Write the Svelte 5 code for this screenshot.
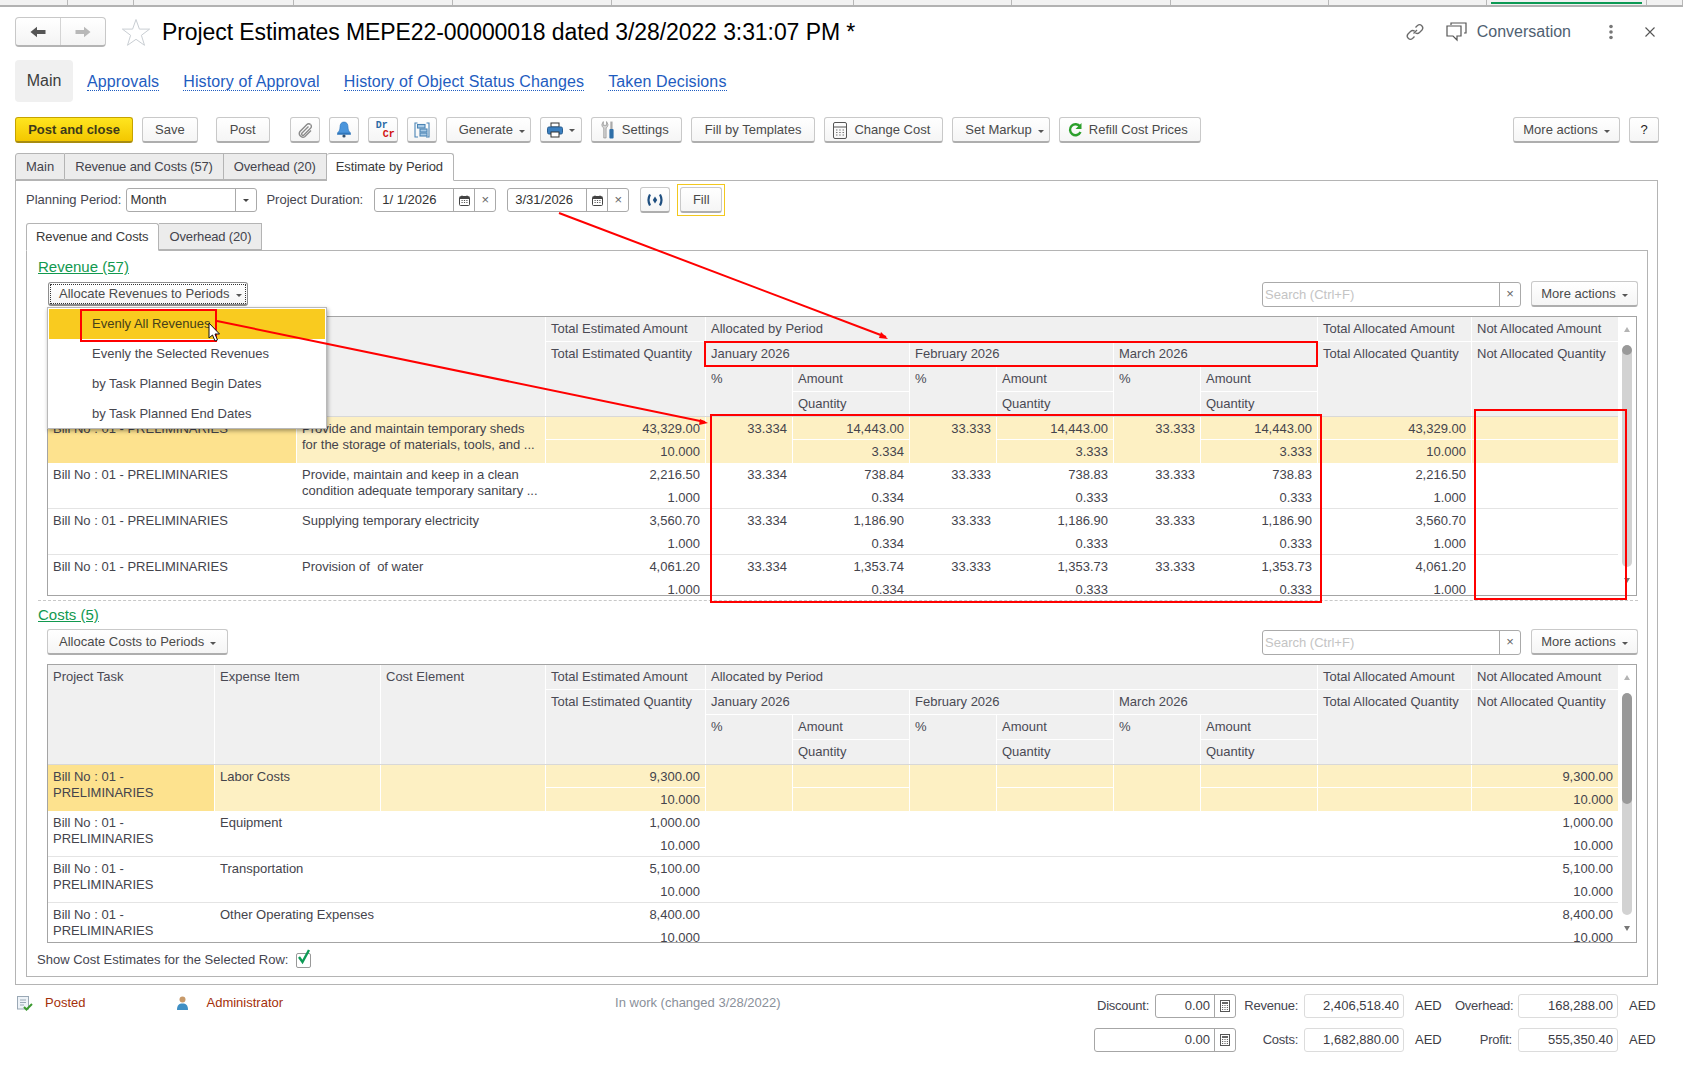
<script lang="ts">
  const topTabs = [68, 66, 160, 159, 159, 242, 158, 159, 158, 158, 160, 36];

  const links = ["Approvals", "History of Approval", "History of Object Status Changes", "Taken Decisions"];

  const menuItems = ["Evenly All Revenues", "Evenly the Selected Revenues", "by Task Planned Begin Dates", "by Task Planned End Dates"];

  const months = ["January 2026", "February 2026", "March 2026"];

  const split = (a1: string, a2: string, a3: string, q1 = "0.334", q2 = "0.333", q3 = "0.333") => [
    { pct: "33.334", amt: a1, qty: q1 },
    { pct: "33.333", amt: a2, qty: q2 },
    { pct: "33.333", amt: a3, qty: q3 },
  ];

  const noSplit = [{}, {}, {}] as any[];
  const bill = "Bill No : 01 - PRELIMINARIES";
  const billWrap = ["Bill No : 01 -", "PRELIMINARIES"];

  const revenue = {
    cls: "rev",
    lead: ["", ""],
    thumb: "thumb-small",
    rows: [
      {
        sel: true,
        cells: [[bill], ["Provide and maintain temporary sheds", "for the storage of materials, tools, and ..."]],
        est: "43,329.00", qty: "10.000",
        periods: split("14,443.00", "14,443.00", "14,443.00", "3.334", "3.333", "3.333"),
        ta: "43,329.00", tq: "10.000", na: "", nq: "",
      },
      {
        cells: [[bill], ["Provide, maintain and keep in a clean", "condition adequate temporary sanitary ..."]],
        est: "2,216.50", qty: "1.000",
        periods: split("738.84", "738.83", "738.83"),
        ta: "2,216.50", tq: "1.000", na: "", nq: "",
      },
      {
        cells: [[bill], ["Supplying temporary electricity"]],
        est: "3,560.70", qty: "1.000",
        periods: split("1,186.90", "1,186.90", "1,186.90"),
        ta: "3,560.70", tq: "1.000", na: "", nq: "",
      },
      {
        cells: [[bill], ["Provision of  of water"]],
        est: "4,061.20", qty: "1.000",
        periods: split("1,353.74", "1,353.73", "1,353.73"),
        ta: "4,061.20", tq: "1.000", na: "", nq: "",
      },
    ],
  };

  const costRow = (item: string, est: string, sel = false) => ({
    sel,
    cells: [billWrap, [item], [""]],
    est, qty: "10.000",
    periods: noSplit,
    ta: "", tq: "", na: est, nq: "10.000",
  });

  const costs = {
    cls: "cost",
    lead: ["Project Task", "Expense Item", "Cost Element"],
    thumb: "thumb-large",
    rows: [
      costRow("Labor Costs", "9,300.00", true),
      costRow("Equipment", "1,000.00"),
      costRow("Transportation", "5,100.00"),
      costRow("Other Operating Expenses", "8,400.00"),
    ],
  };
</script>

{#snippet calc()}
  <svg width="10" height="12" viewBox="0 0 10 12"><rect x="0.5" y="0.5" width="9" height="11" fill="#fff" stroke="#555" /><rect x="2" y="2" width="6" height="2" fill="#666" /><path d="M2 5.500h1.200M4.400 5.500h1.200M6.800 5.500h1.200M2 7.500h1.200M4.400 7.500h1.200M6.800 7.500h1.200M2 9.500h1.200M4.400 9.500h1.200M6.800 9.500h1.200" stroke="#666" /></svg>
{/snippet}

{#snippet calendar()}
  <svg width="11" height="11" viewBox="0 0 11 11"><rect x="0.5" y="1.5" width="10" height="9" rx="1" fill="#fff" stroke="#444" /><rect x="1" y="2" width="9" height="2" fill="#444" /><path d="M3 0.5v2M8 0.5v2" stroke="#444" /><path d="M2.500 5.500h1.200M4.900 5.500h1.200M7.300 5.500h1.200M2.500 7.500h1.200M4.900 7.500h1.200M7.300 7.500h1.200" stroke="#555" /></svg>
{/snippet}

{#snippet caret()}
  <span class="caret"></span>
{/snippet}

{#snippet sectionTools(label: string, focused: boolean)}
  <div class="sec-tools">
    <button class="btn" class:focused>{label}{@render caret()}</button>
    <div class="sec-right">
      <div class="search">
        <span class="search-text">Search (Ctrl+F)</span>
        <span class="search-x">×</span>
      </div>
      <button class="btn more">More actions{@render caret()}</button>
    </div>
  </div>
{/snippet}

{#snippet sheet(t: any)}
  <div class="sheet {t.cls}">
    <div class="sheet-main">
      <div class="head">
        {#each t.lead as h}
          <div class="hc lead-h">{h}</div>
        {/each}
        <div class="hcol">
          <div class="hc">Total Estimated Amount</div>
          <div class="hc grow">Total Estimated Quantity</div>
        </div>
        <div class="hperiods">
          <div class="hc">Allocated by Period</div>
          <div class="hmonths">
            {#each months as m}
              <div class="hmonth">
                <div class="hc mname">{m}</div>
                <div class="hc pct">%</div>
                <div class="hc">Amount</div>
                <div class="hc">Quantity</div>
              </div>
            {/each}
          </div>
        </div>
        <div class="hcol">
          <div class="hc">Total Allocated Amount</div>
          <div class="hc grow">Total Allocated Quantity</div>
        </div>
        <div class="hcol">
          <div class="hc">Not Allocated Amount</div>
          <div class="hc grow">Not Allocated Quantity</div>
        </div>
      </div>
      <div class="body">
        {#each t.rows as r}
          <div class="row" class:sel={r.sel}>
            {#each r.cells as lines}
              <div class="c tall">
                {#each lines as line}
                  <span class="line">{line}</span>
                {/each}
              </div>
            {/each}
            <div class="c num">{r.est}</div>
            <div class="c num low">{r.qty}</div>
            {#each r.periods as p}
              <div class="c num tall-num">{p.pct ?? ""}</div>
              <div class="c num">{p.amt ?? ""}</div>
              <div class="c num low">{p.qty ?? ""}</div>
            {/each}
            <div class="c num">{r.ta}</div>
            <div class="c num low">{r.tq}</div>
            <div class="c num">{r.na}</div>
            <div class="c num low">{r.nq}</div>
          </div>
        {/each}
      </div>
    </div>
    <div class="scroll {t.thumb}">
      <span class="arrow up"></span>
      <div class="track"><div class="thumb"></div></div>
      <span class="arrow down"></span>
    </div>
  </div>
{/snippet}

<div class="page">
  <div class="strip">
    {#each topTabs as w, i}
      <div class="strip-tab" class:strip-active={i === topTabs.length - 2} style="width: {w}px"></div>
    {/each}
  </div>

  <header class="title-row">
    <div class="nav">
      <button class="nav-btn">
        <svg width="16" height="12" viewBox="0 0 16 12"><path d="M0.5 6 7 0.8V4h8.5v4H7v3.2z" fill="#555" /></svg>
      </button>
      <button class="nav-btn">
        <svg width="16" height="12" viewBox="0 0 16 12"><path d="M15.5 6 9 0.8V4H0.5v4H9v3.2z" fill="#b8b8b8" /></svg>
      </button>
    </div>
    <svg class="star" width="30" height="29" viewBox="0 0 30 29"><path d="M15 1.5l3.4 9.6h10.2l-8.2 6.2 3.1 10-8.5-6-8.5 6 3.1-10-8.2-6.2h10.2z" fill="#fff" stroke="#c9ced3" /></svg>
    <h1>Project Estimates MEPE22-00000018 dated 3/28/2022 3:31:07 PM *</h1>
    <div class="title-actions">
      <svg width="20" height="20" viewBox="0 0 20 20" fill="none" stroke="#6b6b6b" stroke-width="1.3"><path d="M8.5 11.5 L12 8" /><path d="M10.5 5.5l2-2a3.2 3.2 0 0 1 4.5 4.5l-2.5 2.5a3.2 3.2 0 0 1-4.2.2" /><path d="M9.5 14.5l-2 2a3.2 3.2 0 0 1-4.5-4.5l2.5-2.5a3.2 3.2 0 0 1 4.2-.2" /></svg>
      <svg class="talk" width="21" height="20" viewBox="0 0 21 20" fill="none" stroke="#555" stroke-width="1.2"><path d="M5 3V1h15v10h-2" /><path d="M1 4h14v10H11v4l-4-4H1z" fill="#fff" /></svg>
      <span class="conv">Conversation</span>
      <svg class="kebab" width="4" height="16" viewBox="0 0 4 16" fill="#777"><circle cx="2" cy="2.5" r="1.8" /><circle cx="2" cy="8" r="1.8" /><circle cx="2" cy="13.5" r="1.8" /></svg>
      <svg class="close" width="10" height="10" viewBox="0 0 10 10" stroke="#555" stroke-width="1.1"><path d="M0.5 0.5l9 9M9.5 0.5l-9 9" /></svg>
    </div>
  </header>

  <nav class="sections">
    <span class="section-current">Main</span>
    {#each links as link}
      <a class="section-link" href="#top">{link}</a>
    {/each}
  </nav>

  <div class="toolbar">
    <button class="btn primary">Post and close</button>
    <button class="btn">Save</button>
    <button class="btn post">Post</button>
    <button class="btn icon far">
      <svg width="18" height="18" viewBox="0 0 18 18" fill="none" stroke="#8a8a8a" stroke-width="1.4"><path d="M14.5 3.5a2.5 2.5 0 0 0-3.6 0L4 10.500a3.600 3.600 0 0 0 5 5l6-6" /><path d="M12.500 5.500 6 12a1.300 1.300 0 0 0 1.900 1.900l6.600-6.600a2.500 2.500 0 0 0 0-3.800" /></svg>
    </button>
    <button class="btn icon">
      <svg width="16" height="17" viewBox="0 0 16 17"><path d="M8 1c-3 0-4 2.500-4 5 0 3-1 4.500-2.500 6h13C13 10.500 12 9 12 6c0-2.500-1-5-4-5z" fill="#4a95dc" stroke="#2f76bb" stroke-width="0.6" /><rect x="1" y="12" width="14" height="1.800" rx="0.9" fill="#2f76bb" /><circle cx="8" cy="15" r="1.600" fill="#35506b" /></svg>
    </button>
    <button class="btn icon drcr"><span class="dr">Dr</span><span class="cr">Cr</span></button>
    <button class="btn icon">
      <svg width="16" height="16" viewBox="0 0 16 16" fill="none" stroke="#4a84b5" stroke-width="1.1"><path d="M3.500 1H1v14h3M12.500 1H15v14h-3" /><rect x="3.500" y="2.500" width="7.500" height="3.500" fill="#a9cbe6" /><rect x="6" y="7" width="7" height="3" fill="#a9cbe6" /><rect x="6" y="11" width="7" height="3" fill="#a9cbe6" /></svg>
    </button>
    <button class="btn dd">Generate{@render caret()}</button>
    <button class="btn print">
      <svg width="16" height="16" viewBox="0 0 16 16"><rect x="4" y="1" width="8" height="4" fill="#fff" stroke="#333" /><rect x="0.500" y="5" width="15" height="7" rx="1.500" fill="#3a7fc0" stroke="#2a5f90" /><rect x="4" y="10" width="8" height="5" fill="#fff" stroke="#333" /></svg>
      {@render caret()}
    </button>
    <button class="btn with-icon">
      <svg width="15" height="20" viewBox="0 0 16 20"><path d="M4 8v10.500h2.500V8C8 7 8.500 5.500 8.500 4L7 1v4H3.500V1L2 4c0 1.500.5 3 2 4z" fill="#d4d4d4" stroke="#8a8a8a" stroke-width="0.7" /><rect x="11" y="1" width="2.400" height="8" fill="#aaa" /><rect x="10" y="9" width="4.500" height="10" rx="1" fill="#2f6fa8" /></svg>
      Settings
    </button>
    <button class="btn fill-tpl">Fill by Templates</button>
    <button class="btn with-icon">
      <svg width="14" height="17" viewBox="0 0 14 17" fill="none" stroke="#555"><rect x="0.500" y="0.500" width="13" height="16" rx="1.500" /><path d="M1 5h12" /><path d="M3 8h1.500M6.200 8h1.500M9.500 8h1.500M3 10.500h1.500M6.200 10.500h1.500M9.500 10.500h1.500M3 13h1.500M6.200 13h1.500M9.500 13h1.500" stroke="#777" /></svg>
      Change Cost
    </button>
    <button class="btn dd">Set Markup{@render caret()}</button>
    <button class="btn with-icon">
      <svg width="14" height="16" viewBox="0 0 14 16" fill="none"><path d="M12 4.500A5.500 5.500 0 1 0 12.500 10" stroke="#2ca02c" stroke-width="2.400" /><path d="M13.500 1v6h-6z" fill="#2ca02c" /></svg>
      Refill Cost Prices
    </button>
    <div class="toolbar-right">
      <button class="btn more">More actions{@render caret()}</button>
      <button class="btn help">?</button>
    </div>
  </div>

  <div class="tabs">
    <span class="tab">Main</span>
    <span class="tab">Revenue and Costs (57)</span>
    <span class="tab">Overhead (20)</span>
    <span class="tab active">Estimate by Period</span>
  </div>
  <section class="panel">
    <div class="params">
      <span class="lbl">Planning Period:</span>
      <div class="field month"><span class="val">Month</span><span class="seg"><span class="caret dark"></span></span></div>
      <span class="lbl gapl">Project Duration:</span>
      <div class="field date"><span class="val">1/ 1/2026</span><span class="seg">{@render calendar()}</span><span class="seg x">×</span></div>
      <div class="field date"><span class="val">3/31/2026</span><span class="seg">{@render calendar()}</span><span class="seg x">×</span></div>
      <button class="btn radio">
        <svg width="20" height="14" viewBox="0 0 20 14" fill="none" stroke="#1f4f80" stroke-width="2.200"><path d="M5 1.500Q2 7 5 12.500M15 1.500q3 5.500 0 11" /><path d="M10 3.500 12.200 7 10 10.500 7.800 7z" fill="#1f4f80" stroke="none" /></svg>
      </button>
      <div class="fill-wrap"><button class="btn">Fill</button></div>
    </div>

    <div class="tabs inner-tabs">
      <span class="tab active">Revenue and Costs</span>
      <span class="tab">Overhead (20)</span>
    </div>
    <div class="inner">
      <a class="group-link" href="#top">Revenue (57)</a>
      <div class="tools-wrap">
        {@render sectionTools("Allocate Revenues to Periods", true)}
        <ul class="menu">
          {#each menuItems as item, i}
            <li class:hot={i === 0}>{item}</li>
          {/each}
        </ul>
      </div>
      {@render sheet(revenue)}

      <div class="dash"></div>

      <a class="group-link" href="#top">Costs (5)</a>
      <div class="tools-wrap">
        {@render sectionTools("Allocate Costs to Periods", false)}
      </div>
      {@render sheet(costs)}

      <label class="show-row">
        <span>Show Cost Estimates for the Selected Row:</span>
        <span class="check">
          <svg width="16" height="17" viewBox="0 0 16 17" fill="none"><path d="M3 8l3.500 5L13 1" stroke="#0c9a55" stroke-width="2.400" /></svg>
        </span>
      </label>
    </div>
  </section>

  <footer class="footer">
    <div class="status">
      <svg class="st-doc" width="16" height="15" viewBox="0 0 16 15"><rect x="0.500" y="0.500" width="11" height="12.500" fill="#eef3f8" stroke="#9aa8b5" /><path d="M3 4h6M3 6.500h6M3 9h4" stroke="#9aa8b5" /><path d="M7 11l2.500 2.500L15 8" stroke="#3b9a2f" stroke-width="2" fill="none" /></svg>
      <span class="st-red">Posted</span>
      <svg class="st-user" width="13" height="14" viewBox="0 0 13 14"><circle cx="6.500" cy="3.500" r="3" fill="#c89a6a" /><path d="M1 14c0-5 2-6.500 5.500-6.500S12 9 12 14z" fill="#3f8fc4" /></svg>
      <span class="st-red">Administrator</span>
      <span class="st-note">In work (changed 3/28/2022)</span>
    </div>
    <div class="totals">
      <span class="tl">Discount:</span>
      <div class="tf edit"><span>0.00</span><i>{@render calc()}</i></div>
      <span class="tl">Revenue:</span>
      <div class="tf">2,406,518.40</div>
      <span class="aed">AED</span>
      <span class="tl">Overhead:</span>
      <div class="tf">168,288.00</div>
      <span class="aed">AED</span>

      <div class="tf edit wide"><span>0.00</span><i>{@render calc()}</i></div>
      <span class="tl">Costs:</span>
      <div class="tf">1,682,880.00</div>
      <span class="aed">AED</span>
      <span class="tl">Profit:</span>
      <div class="tf">555,350.40</div>
      <span class="aed">AED</span>
    </div>
  </footer>

  <!-- red notes drawn over the screenshot -->
  <svg class="notes" width="1683" height="1068" viewBox="0 0 1683 1068" fill="none" stroke="#f00" stroke-width="2">
    <path d="M559 213 886 337" />
    <path d="M888 339 879 338 881 332z" fill="#f00" stroke="none" />
    <path d="M217 321 705 422" />
    <path d="M708 423 699 425 700 419z" fill="#f00" stroke="none" />
    <rect x="81" y="310" width="135" height="31" />
    <rect x="705" y="342" width="612" height="24" />
    <rect x="711" y="415" width="610" height="187" />
    <rect x="1475" y="410" width="151" height="189" />
    <path d="M209 323v15l3.500-3 2.500 6 2.500-1-2.500-6h4.500z" fill="#fff" stroke="#111" stroke-width="1" />
  </svg>
</div>

<style>
  :global(body) {
    margin: 0;
    background: #fff;
  }

  .page {
    position: relative;
    width: 1683px;
    height: 1068px;
    overflow: hidden;
    font: 13px/16px "Liberation Sans", Arial, sans-serif;
    color: #45454f;
    box-sizing: border-box;
  }

  .page * {
    box-sizing: border-box;
  }

  /* browser-like strip at the very top */
  .strip {
    display: flex;
    height: 7px;
    background: #f2f2f2;
    border-bottom: 2px solid #b2b2b2;
  }

  .strip-tab {
    flex: none;
    border-right: 1px solid #b8b8b8;
  }

  .strip-active {
    position: relative;
  }

  .strip-active::after {
    content: "";
    position: absolute;
    left: 4px;
    right: 4px;
    top: 2px;
    height: 2px;
    background: #0d9a55;
  }

  .title-row {
    display: flex;
    align-items: center;
    height: 30px;
    margin: 10px 24px 0 15px;
  }

  .nav {
    display: flex;
    width: 91px;
    height: 30px;
    border: 1px solid #c8c8c8;
    border-bottom: 2px solid #b4b4b4;
    border-radius: 4px;
    background: linear-gradient(#fff, #f4f4f4);
  }

  .nav-btn {
    flex: 1;
    display: flex;
    align-items: center;
    justify-content: center;
    background: none;
    border: 0;
    padding: 0;
  }

  .nav-btn + .nav-btn {
    border-left: 1px solid #d4d4d4;
  }

  .star {
    margin-left: 15px;
  }

  h1 {
    margin: 0 0 0 11px;
    font-size: 23px;
    font-weight: 400;
    line-height: 30px;
    color: #000;
    white-space: nowrap;
    letter-spacing: -0.08px;
  }

  .title-actions {
    display: flex;
    align-items: center;
    margin-left: auto;
    margin-right: 3px;
    color: #4f6172;
    font-size: 16px;
  }

  .talk {
    margin-left: 21px;
  }

  .conv {
    margin-left: 10px;
  }

  .kebab {
    margin-left: 38px;
  }

  .close {
    margin-left: 32px;
    margin-right: 1px;
  }

  .sections {
    display: flex;
    align-items: center;
    height: 42px;
    margin: 13px 24px 0 15px;
    font-size: 16px;
  }

  .section-current {
    display: flex;
    align-items: center;
    height: 42px;
    width: 58px;
    justify-content: center;
    background: #f0f0f0;
    border-radius: 4px;
    color: #3c3c3c;
    margin-right: 14px;
  }

  .section-link {
    color: #1e5cc0;
    text-decoration: none;
    border-bottom: 1px dotted #1e5cc0;
    margin-top: 2px;
    margin-right: 24px;
    line-height: 17px;
    letter-spacing: 0.12px;
  }

  .btn {
    display: inline-flex;
    align-items: center;
    justify-content: center;
    height: 26px;
    padding: 1px 12px 0;
    font: inherit;
    color: #4a4a4a;
    white-space: nowrap;
    background: linear-gradient(#fff, #f5f5f5);
    border: 1px solid #c9c9c9;
    border-bottom: 2px solid #aeaeae;
    border-radius: 3px;
  }

  .caret {
    display: inline-block;
    width: 0;
    height: 0;
    margin-left: 6px;
    margin-top: 2px;
    border: 3px solid transparent;
    border-top: 3px solid #555;
    border-bottom: 0;
  }

  .toolbar {
    display: flex;
    align-items: center;
    gap: 9px;
    margin: 15px 24px 0 15px;
    height: 26px;
  }

  .primary {
    width: 118px;
    font-weight: 700;
    color: #3d3a1a;
    background: linear-gradient(#ffe51f, #f3c700);
    border-color: #c6a300;
    border-bottom-color: #a88c10;
  }

  .post {
    margin-left: 9px;
    padding: 1px 13px 0;
  }

  .far {
    margin-left: 11px;
  }

  .icon {
    width: 30px;
    padding: 0;
  }

  .drcr {
    position: relative;
    display: block;
    font: 700 10px/10px "Liberation Mono", monospace;
  }

  .drcr span {
    position: absolute;
  }

  .dr {
    left: 7px;
    top: 3px;
    color: #2b6aa6;
  }

  .cr {
    left: 14px;
    top: 12px;
    color: #d01010;
  }

  .dd {
    padding-right: 5px;
  }

  .print {
    width: 42px;
    padding: 0;
  }

  .with-icon {
    gap: 7px;
    padding: 1px 12px 0 8px;
  }

  .fill-tpl {
    padding: 1px 13px 0;
  }

  .toolbar-right {
    display: flex;
    gap: 9px;
    margin-left: auto;
  }

  .help {
    width: 30px;
    padding: 0;
    color: #222;
  }

  .tabs {
    display: flex;
    height: 27px;
    margin: 10px 24px 0 15px;
    position: relative;
    z-index: 1;
  }

  .tab {
    display: flex;
    align-items: center;
    padding: 0 10px;
    height: 27px;
    background: #ececec;
    border: 1px solid #b4b4b4;
    border-left: 0;
    color: #44444c;
    white-space: nowrap;
    letter-spacing: -0.15px;
  }

  .tab:first-child {
    border-left: 1px solid #b4b4b4;
    border-radius: 3px 0 0 0;
    letter-spacing: 0;
  }

  .tab.active {
    background: #fff;
    border-bottom-color: #fff;
    border-radius: 3px 3px 0 0;
    height: 28px;
    padding: 0 10px 0 9px;
    color: #3a3a3a;
    letter-spacing: -0.1px;
  }

  .panel {
    margin: 0 25px 0 15px;
    padding: 3px 10px 7px;
    height: 805px;
    border: 1px solid #b4b4b4;
  }

  .params {
    display: flex;
    align-items: center;
    height: 32px;
  }

  .lbl {
    white-space: nowrap;
  }

  .gapl {
    margin-left: 9px;
  }

  .field {
    display: flex;
    align-items: stretch;
    height: 24px;
    border: 1px solid #aaa;
    border-radius: 3px;
    background: #fff;
  }

  .val {
    flex: 1;
    line-height: 22px;
    padding-left: 3px;
    color: #333;
  }

  .seg {
    display: flex;
    align-items: center;
    justify-content: center;
    width: 21px;
    border-left: 1px solid #aaa;
  }

  .seg.x {
    color: #666;
    font-size: 13px;
  }

  .caret.dark {
    margin: 0;
    border-top-color: #444;
  }

  .month {
    width: 131px;
    margin-left: 5px;
  }

  .date {
    width: 122px;
    margin-left: 11px;
  }

  .date .val {
    padding-left: 7px;
  }

  .radio {
    width: 30px;
    padding: 0;
    margin-left: 11px;
  }

  .fill-wrap {
    display: flex;
    align-items: center;
    justify-content: center;
    width: 48px;
    height: 32px;
    margin-left: 7px;
    border: 1px solid #f2c81e;
  }

  .fill-wrap .btn {
    width: 42px;
    padding: 0;
  }

  .inner-tabs {
    margin: 7px 0 0 0;
  }

  .inner {
    position: relative;
    height: 727px;
    margin: 0 -1px 0 0;
    padding: 6px 9px 0 11px;
    border: 1px solid #b4b4b4;
  }

  .group-link {
    display: block;
    width: fit-content;
    font-size: 15px;
    line-height: 20px;
    color: #12994f;
    text-decoration: underline;
  }

  .tools-wrap {
    position: relative;
    padding-left: 9px;
    margin-top: 4px;
  }

  .sec-tools {
    display: flex;
    align-items: center;
    justify-content: space-between;
    height: 26px;
  }

  .sec-tools > .btn {
    padding: 1px 11px 0;
  }

  .sec-tools > .btn.focused {
    height: 24px;
    margin-left: 1px;
    padding: 1px 5px 0 10px;
    outline: 1px dotted #333;
    outline-offset: -3px;
    border-color: #8d8d8d;
  }

  .sec-right {
    display: flex;
    align-items: center;
    gap: 10px;
  }

  .search {
    display: flex;
    width: 259px;
    height: 25px;
    border: 1px solid #aaa;
    border-radius: 3px;
    background: #fff;
  }

  .search-text {
    flex: 1;
    line-height: 23px;
    padding-left: 2px;
    color: #c4c4c4;
  }

  .search-x {
    width: 21px;
    border-left: 1px solid #aaa;
    text-align: center;
    line-height: 22px;
    color: #666;
  }

  .more {
    width: 107px;
    padding: 1px 0 0;
  }

  .menu {
    position: absolute;
    z-index: 3;
    left: 9px;
    top: 26px;
    width: 280px;
    height: 122px;
    margin: 0;
    padding: 1px;
    list-style: none;
    background: #fff;
    border: 1px solid #b9b9b9;
    box-shadow: 1px 2px 4px rgba(0, 0, 0, 0.35);
  }

  .menu li {
    height: 30px;
    line-height: 29px;
    padding-left: 43px;
    color: #46464e;
  }

  .menu .hot {
    background: #f9cb1f;
    color: #46401a;
  }

  .sheet {
    display: flex;
    margin: 9px 0 0 9px;
    height: 280px;
    width: 1590px;
    border: 1px solid #a4a4a4;
  }

  .rev {
    --lead: 248px 249px;
  }

  .cost {
    --lead: 166px 166px 165px;
    height: 279px;
  }

  .sheet-main {
    width: 1570px;
    overflow: hidden;
    flex: none;
  }

  .head {
    display: grid;
    grid-template-columns: var(--lead) 160px 612px 154px 147px;
    height: 100px;
    background: #fff;
    border-bottom: 1px solid #d8d8d8;
  }

  .hc {
    min-height: 24px;
    padding: 0 5px;
    line-height: 23px;
    white-space: nowrap;
    background: #f0f0f0;
    border-left: 1px solid #fff;
    border-bottom: 1px solid #fff;
    color: #4a4a54;
  }

  .lead-h {
    height: 99px;
    border-bottom: 0;
  }

  .lead-h:first-child {
    border-left: 0;
  }

  .hcol {
    display: flex;
    flex-direction: column;
  }

  .hcol .hc {
    height: 25px;
    flex: none;
  }

  .hcol .grow {
    height: 74px;
    border-bottom: 0;
  }

  .hperiods > .hc {
    height: 25px;
  }

  .hmonths {
    display: grid;
    grid-template-columns: repeat(3, 204px);
  }

  .hmonth {
    display: grid;
    grid-template-columns: 87px 117px;
    grid-template-rows: 25px 25px 24px;
  }

  .mname {
    grid-column: 1 / 3;
  }

  .pct {
    grid-row: 2 / 4;
    border-bottom: 0;
  }

  .hmonth .hc:last-child {
    border-bottom: 0;
  }

  .row {
    display: grid;
    grid-template-columns: var(--lead) 160px repeat(3, 87px 117px) 154px 147px;
    grid-template-rows: 23px 23px;
    grid-auto-flow: column;
    height: 46px;
    border-bottom: 1px solid #e4e4e4;
  }

  .c {
    padding: 0 5px;
    min-width: 0;
    overflow: hidden;
    white-space: pre;
    line-height: 23px;
    border-left: 1px solid transparent;
    color: #44444c;
  }

  .c:first-child {
    border-left: 0;
  }

  .tall,
  .tall-num {
    grid-row: span 2;
  }

  .tall {
    padding-top: 4px;
    line-height: 16px;
  }

  .line {
    display: block;
  }

  .num {
    text-align: right;
  }

  .row.sel {
    border-bottom: 2px solid #e9e9e9;
  }

  .sel .c {
    background: #fdf0c3;
    border-left-color: #fff;
  }

  .sel .c:first-child {
    background: #fde28e;
  }

  .sel .c:not(.tall):not(.tall-num):not(.low) {
    border-bottom: 1px solid #fff;
  }

  .scroll {
    position: relative;
    flex: 1;
    display: flex;
    flex-direction: column;
    align-items: center;
    padding-top: 10px;
  }

  .arrow {
    width: 0;
    height: 0;
    border-left: 3px solid transparent;
    border-right: 3px solid transparent;
  }

  .arrow.up {
    border-bottom: 5px solid #b4b4b4;
  }

  .arrow.down {
    margin-top: 11px;
    border-top: 5px solid #777;
  }

  .track {
    width: 10px;
    height: 222px;
    margin-top: 13px;
    background: #d2d2d2;
    border-radius: 5px;
    overflow: hidden;
  }

  .thumb {
    background: #999;
    border-radius: 5px;
  }

  .thumb-small .thumb {
    height: 10px;
  }

  .thumb-large .thumb {
    height: 111px;
  }

  .dash {
    margin-top: 4px;
    height: 1px;
    border-top: 1px dashed #c8c8c8;
  }

  .dash + .group-link {
    margin-top: 4px;
  }

  .show-row {
    display: flex;
    align-items: center;
    gap: 8px;
    height: 20px;
    margin-top: 7px;
    margin-left: -1px;
  }

  .check {
    position: relative;
    width: 15px;
    height: 15px;
    border: 1px solid #999;
    border-radius: 2px;
  }

  .check svg {
    position: absolute;
    left: -1px;
    top: -5px;
  }

  .footer {
    display: flex;
    justify-content: space-between;
    margin: 9px 25px 0 17px;
  }

  .status {
    display: flex;
    align-items: center;
    height: 18px;
  }

  .st-red {
    margin-left: 12px;
    color: #a4300a;
  }

  .st-user {
    margin-left: 91px;
  }

  .st-user + .st-red {
    margin-left: 17px;
  }

  .st-note {
    margin-left: 332px;
    color: #8a909a;
  }

  .totals {
    display: grid;
    grid-template-columns: 55px 81px 56px 100px 39px 57px 100px 34px;
    column-gap: 6px;
    row-gap: 10px;
    align-items: center;
  }

  .tl {
    text-align: right;
    white-space: nowrap;
    letter-spacing: -0.25px;
  }

  .tf {
    display: flex;
    align-items: center;
    justify-content: flex-end;
    height: 24px;
    padding-right: 4px;
    border: 1px solid #dcdcdc;
    border-radius: 3px;
    color: #3c3c44;
  }

  .tf.edit {
    padding-right: 0;
    border-color: #a6a6a6;
  }

  .tf.edit span {
    padding-right: 4px;
  }

  .tf.edit i {
    display: flex;
    align-items: center;
    justify-content: center;
    width: 21px;
    height: 22px;
    border-left: 1px solid #a6a6a6;
  }

  .wide {
    grid-column: 1 / 3;
  }

  .aed {
    padding-left: 5px;
    color: #3c3c44;
  }

  .notes {
    position: absolute;
    left: 0;
    top: 0;
    z-index: 5;
    pointer-events: none;
  }
</style>
